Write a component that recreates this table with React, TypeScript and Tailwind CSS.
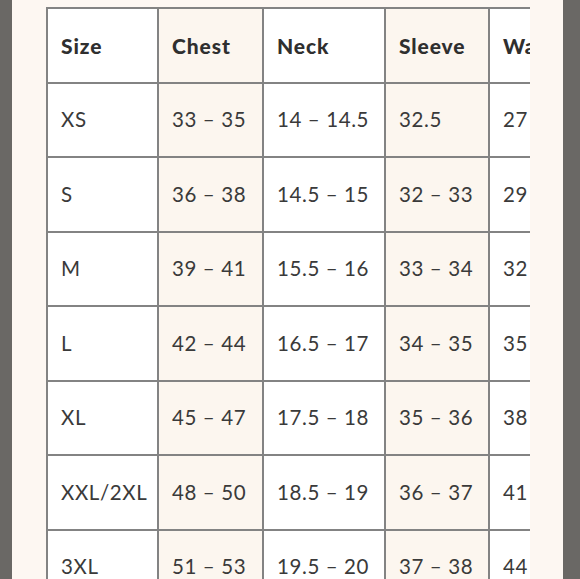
import React from "react";

const header = ["Size", "Chest", "Neck", "Sleeve", "Waist"];
const rows = [
  ["XS", "33 – 35", "14 – 14.5", "32.5", "27"],
  ["S", "36 – 38", "14.5 – 15", "32 – 33", "29"],
  ["M", "39 – 41", "15.5 – 16", "33 – 34", "32"],
  ["L", "42 – 44", "16.5 – 17", "34 – 35", "35"],
  ["XL", "45 – 47", "17.5 – 18", "35 – 36", "38"],
  ["XXL/2XL", "48 – 50", "18.5 – 19", "36 – 37", "41"],
  ["3XL", "51 – 53", "19.5 – 20", "37 – 38", "44"],
];

const colBg = ["bg-white", "bg-[#fcf6ef]", "bg-white", "bg-[#fcf6ef]", "bg-white"];

function Cell({ text, col, bold }: { text: string; col: number; bold?: boolean }) {
  return (
    <div
      className={`${colBg[col]} border-l-2 border-t-2 border-[#838383] h-[74.5px] flex items-center pl-[13px] whitespace-nowrap ${
        bold
          ? "font-black text-[#2f2f2f] text-[21px] tracking-[0.9px]"
          : "text-[#3a3a3a] text-[20.5px] tracking-[0.6px]"
      }`}
    >
      {text}
    </div>
  );
}

export default function App() {
  return (
    <div
      className="w-[580px] h-[579px] overflow-hidden flex bg-[#fdf7f2]"
      style={{ fontFamily: "Lato, 'Noto Sans', sans-serif" }}
    >
      <div className="w-[12px] shrink-0 bg-[#6a6865]" />
      <div className="w-[34px] shrink-0" />
      <div className="w-[484px] shrink-0 overflow-hidden pt-[7px]">
        <div className="grid grid-cols-[111px_105px_122px_104px_140px] w-[582px]">
          {header.map((h, i) => (
            <Cell key={h} text={h} col={i} bold />
          ))}
          {rows.map((r) =>
            r.map((t, i) => <Cell key={r[0] + i} text={t} col={i} />)
          )}
        </div>
      </div>
      <div className="w-[33px] shrink-0" />
      <div className="w-[17px] shrink-0 bg-[#6a6865]" />
    </div>
  );
}
